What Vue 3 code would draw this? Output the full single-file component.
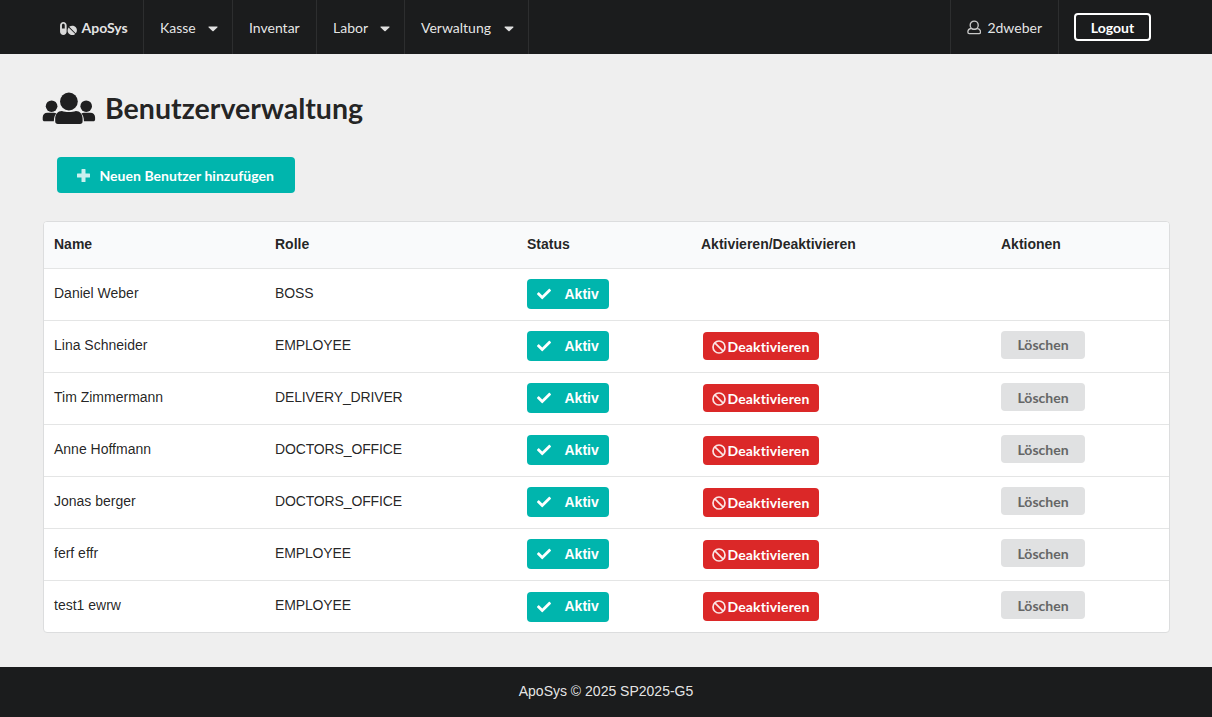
<script setup>
const menu = [
  { label: 'Kasse', width: 89, drop: true },
  { label: 'Inventar', width: 84, drop: false },
  { label: 'Labor', width: 88, drop: true },
  { label: 'Verwaltung', width: 124, drop: true }
]
const headers = ['Name', 'Rolle', 'Status', 'Aktivieren/Deaktivieren', 'Aktionen']
const users = [
  { name: 'Daniel Weber', role: 'BOSS' },
  { name: 'Lina Schneider', role: 'EMPLOYEE' },
  { name: 'Tim Zimmermann', role: 'DELIVERY_DRIVER' },
  { name: 'Anne Hoffmann', role: 'DOCTORS_OFFICE' },
  { name: 'Jonas berger', role: 'DOCTORS_OFFICE' },
  { name: 'ferf effr', role: 'EMPLOYEE' },
  { name: 'test1 ewrw', role: 'EMPLOYEE' }
]
</script>

<template>
  <div class="page">
    <nav class="nav">
      <div class="inner">
        <a class="item brand">
          <svg class="pills" viewBox="0 0 576 512" aria-hidden="true">
            <path d="M112 32C50.100 32 0 82.100 0 144v224c0 61.900 50.100 112 112 112s112-50.100 112-112V144c0-61.900-50.100-112-112-112zm48 224H64V144c0-26.500 21.500-48 48-48s48 21.500 48 48v112zm139.700-29.700c-3.500-3.500-9.400-3.100-12.300.8-45.300 62.500-40.400 150.100 15.900 206.400 56.300 56.300 143.900 61.200 206.400 15.900 4-2.900 4.300-8.800.8-12.300L299.700 226.300zm229-19c-56.300-56.300-143.900-61.200-206.400-15.900-4 2.900-4.300 8.800-.8 12.300l210.800 210.800c3.500 3.500 9.400 3.100 12.300-.8 45.300-62.600 40.500-150.100-15.900-206.400z" />
          </svg>
          <b>ApoSys</b>
        </a>
        <a v-for="m in menu" :key="m.label" class="item" :style="{ width: m.width + 'px' }">
          {{ m.label }}
          <svg v-if="m.drop" class="caret" viewBox="0 0 10 6" aria-hidden="true">
            <path d="M1 .5h8c.5 0 .7.600.3 1L5.600 5.100a.9.9 0 0 1-1.200 0L.7 1.500C.3 1.100.5.500 1 .5z" />
          </svg>
        </a>
        <a class="item user">
          <svg class="person" viewBox="0 0 15 15" aria-hidden="true">
            <circle cx="7.500" cy="5.100" r="4.200" />
            <path d="M4.300 8.500C2.200 8.800.9 10.300.9 12.300c0 1 .6 1.600 1.500 1.600h10.200c.9 0 1.500-.6 1.500-1.600 0-2-1.300-3.500-3.400-3.800M4.500 8.600c1.500 1.100 4.500 1.100 6 0" />
          </svg>
          2dweber
        </a>
        <button class="logout">Logout</button>
      </div>
    </nav>

    <main class="content">
      <h1>
        <svg class="group" viewBox="0 0 54 34" aria-hidden="true">
          <circle cx="9.600" cy="14.200" r="5.800" />
          <circle cx="44.200" cy="14.200" r="5.800" />
          <path d="M.7 27.500v-2c0-3 2-4.800 4.600-4.800h6.400c1.100 0 2 .3 2.700.8-1.500 1.500-2.400 3.800-2.500 6.900v.9H2.500c-1.100 0-1.800-.7-1.800-1.800z" />
          <path d="M53.100 27.500v-2c0-3-2-4.800-4.600-4.800h-6.400c-1.100 0-2 .3-2.700.8 1.500 1.500 2.400 3.800 2.500 6.900v.9h9.400c1.100 0 1.800-.7 1.800-1.800z" />
          <circle cx="26.900" cy="9.500" r="8.900" />
          <path d="M13.200 29.300v-2.600c0-4.600 2.700-7.800 6.700-7.800 2 .7 4.400 1.200 7 1.200s5-.5 7-1.200c4 0 6.700 3.200 6.700 7.800v2.600c0 1.700-1 2.700-2.700 2.700h-22c-1.700 0-2.700-1-2.700-2.700z" />
        </svg>
        <span>Benutzerverwaltung</span>
      </h1>

      <button class="add">
        <svg viewBox="0 0 13 13" aria-hidden="true">
          <path d="M5 0h3q.5 0 .5.500v4h4q.5 0 .5.500v3q0 .5-.5.500h-4v4q0 .5-.5.500H5q-.5 0-.5-.5v-4h-4Q0 8.500 0 8V5q0-.5.500-.5h4v-4Q4.500 0 5 0z" />
        </svg>
        Neuen Benutzer hinzufügen
      </button>

      <div class="table">
        <div class="row head">
          <div v-for="h in headers" :key="h">{{ h }}</div>
        </div>
        <div v-for="(u, i) in users" :key="u.name" class="row">
          <div>{{ u.name }}</div>
          <div class="role">{{ u.role }}</div>
          <div>
            <span class="label">
              <svg viewBox="0 0 512 512" aria-hidden="true">
                <path d="M173.900 439.400l-166.400-166.400c-10-10-10-26.200 0-36.200l36.200-36.200c10-10 26.200-10 36.200 0L192 312.700 432.100 72.600c10-10 26.200-10 36.200 0l36.200 36.200c10 10 10 26.200 0 36.200l-294.400 294.400c-10 10-26.200 10-36.200 0z" />
              </svg>
              Aktiv
            </span>
          </div>
          <div>
            <button v-if="i > 0" class="deactivate">
              <svg viewBox="0 0 14 14" aria-hidden="true">
                <circle cx="7" cy="7" r="6" />
                <path d="M2.800 2.800l8.400 8.400" />
              </svg>
              Deaktivieren
            </button>
          </div>
          <div>
            <button v-if="i > 0" class="delete" :class="{ low: i > 1 }">Löschen</button>
          </div>
        </div>
      </div>
    </main>

    <footer class="footer">ApoSys © 2025 SP2025-G5</footer>
  </div>
</template>

<style>
body {
  background: #efefef;
}
</style>

<style scoped>
.page {
  display: flex;
  flex-direction: column;
  height: 717px;
  box-sizing: border-box;
  overflow: hidden;
  color: rgba(0, 0, 0, 0.87);
  font: 14px/20px Lato, "Liberation Sans", sans-serif;
}
.page * {
  box-sizing: border-box;
}
button {
  border: 0;
  padding: 0;
  font: bold 14px/14px Lato, sans-serif;
  border-radius: 4px;
}
.nav {
  flex: none;
  height: 54px;
  background: #1b1c1d;
  color: rgba(255, 255, 255, 0.9);
}
.inner {
  display: flex;
  align-items: center;
  width: 1126px;
  height: 54px;
  margin: 0 43px;
}
.item {
  display: flex;
  align-items: center;
  height: 54px;
  padding: 2px 16px 0;
  border-right: 1px solid #2d2e2f;
  white-space: nowrap;
}
.brand {
  width: 101px;
  padding-left: 16.500px;
  padding-right: 0;
}
.pills {
  width: 17px;
  height: 15px;
  margin-right: 5px;
  fill: #d9d9d9;
}
.caret {
  width: 10px;
  height: 6px;
  margin: 2px -1.500px 0 auto;
  fill: #e0e0e0;
}
.user {
  width: 109px;
  margin-left: auto;
  border-left: 1px solid #2d2e2f;
}
.person {
  width: 15px;
  height: 15px;
  margin: -1px 6px 0 0;
  fill: none;
  stroke: #c8c8c8;
  stroke-width: 1.4;
}
.logout {
  width: 77px;
  height: 28px;
  margin: 0 18px 0 15px;
  padding-top: 2px;
  border: 2px solid #fff;
  background: transparent;
  color: #fff;
}
.content {
  flex: 1;
  padding: 38px 42px 0 42px;
}
h1 {
  display: flex;
  align-items: flex-start;
  height: 36px;
  margin: 0;
  font-size: 28.550px;
  line-height: 32px;
}
.group {
  width: 54px;
  height: 34px;
  margin-right: 9px;
  fill: #1f1f20;
}
.add {
  display: flex;
  align-items: center;
  width: 238px;
  height: 36px;
  margin: 29px 0 28px 15px;
  padding: 2px 0 0 19.500px;
  background: #00b5ad;
  color: #fff;
  letter-spacing: 0.03px;
}
.add svg {
  width: 13px;
  height: 13px;
  margin: -1px 10px 0 0;
  fill: rgba(255, 255, 255, 0.8);
}
.table {
  width: 1127px;
  margin-left: 1px;
  border: 1px solid #dcddde;
  border-radius: 4px;
  background: #fff;
  overflow: hidden;
  font-family: "Liberation Sans", sans-serif;
}
.row {
  display: grid;
  grid-template-columns: 221px 252px 174px 300px 1fr;
  height: 52px;
  padding: 10px 0 0 10px;
  border-top: 1px solid #e4e5e5;
}
.row > div {
  line-height: 29px;
}
.row > .role {
  letter-spacing: -0.14px;
}
.head {
  height: 46px;
  padding-top: 8px;
  border-top: 0;
  background: #f9fafb;
  font-weight: bold;
}
.label {
  display: flex;
  align-items: center;
  width: 82px;
  height: 30px;
  padding-left: 10px;
  border-radius: 4px;
  background: #00b5ad;
  color: #fff;
  font-weight: bold;
}
.row:last-child .label {
  margin-top: 1px;
  padding-bottom: 1px;
}
.label svg {
  width: 14px;
  height: 14px;
  margin-right: 13.500px;
  fill: #fff;
}
.deactivate {
  display: flex;
  align-items: center;
  width: 116px;
  height: 28px;
  margin: 1px 0 0 2px;
  padding: 2px 0 0 9px;
  background: #db2828;
  color: #fff;
  letter-spacing: 0.15px;
  white-space: nowrap;
}
.row:nth-last-child(-n + 4) .deactivate {
  height: 29px;
  padding-top: 1px;
}
.deactivate svg {
  width: 14px;
  height: 14px;
  margin-right: 1.500px;
  fill: none;
  stroke: #fbe5e5;
  stroke-width: 1.7;
}
.delete {
  display: block;
  width: 84px;
  height: 28px;
  background: #e0e1e2;
  color: #656666;
}
.delete.low {
  padding-top: 2px;
}
.footer {
  flex: none;
  height: 50px;
  background: #1b1c1d;
  color: rgba(255, 255, 255, 0.9);
  font: 14px/49px "Liberation Sans", sans-serif;
  text-align: center;
}
</style>
